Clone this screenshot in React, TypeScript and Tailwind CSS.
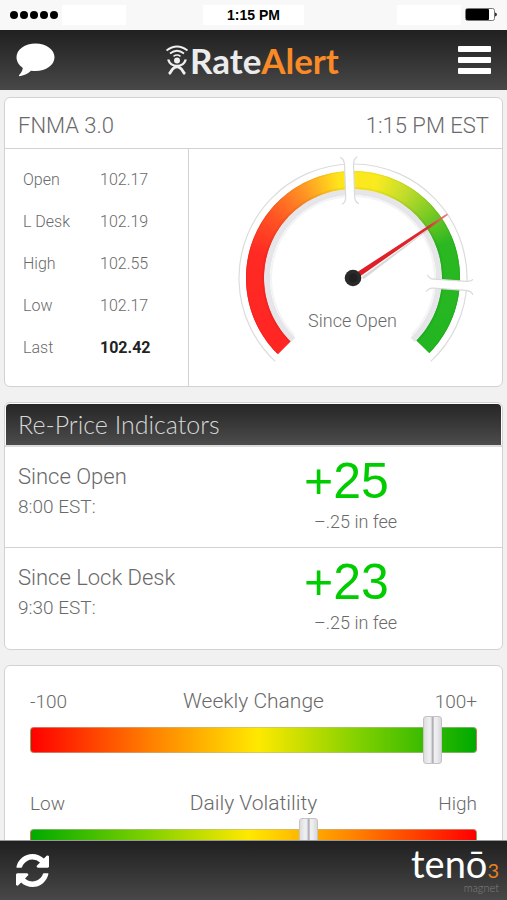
const quotes = [
  { label: "Open", value: "102.17" },
  { label: "L Desk", value: "102.19" },
  { label: "High", value: "102.55" },
  { label: "Low", value: "102.17" },
  { label: "Last", value: "102.42", strong: true },
];

const indicators = [
  { title: "Since Open", time: "8:00 EST:", change: "+25", fee: "–.25 in fee" },
  { title: "Since Lock Desk", time: "9:30 EST:", change: "+23", fee: "–.25 in fee" },
];

// angle in degrees (clockwise from 3 o'clock) -> rgb
const stops: [number, number[]][] = [
  [134, [255, 38, 36]],
  [195, [255, 42, 36]],
  [218, [255, 84, 36]],
  [240, [255, 146, 36]],
  [262, [255, 228, 28]],
  [284, [250, 234, 32]],
  [303, [190, 220, 44]],
  [322, [116, 200, 36]],
  [340, [44, 184, 34]],
  [406, [34, 182, 34]],
];

function colorAt(angle: number) {
  const i = Math.max(1, stops.findIndex(([a]) => a >= angle));
  const [a0, c0] = stops[i - 1];
  const [a1, c1] = stops[i];
  const t = (angle - a0) / (a1 - a0);
  return `rgb(${c0.map((c, k) => Math.round(c + (c1[k] - c) * t)).join(",")})`;
}

function arc(r: number, from: number, to: number) {
  const p = (a: number) => {
    const rad = (a * Math.PI) / 180;
    return `${(r * Math.cos(rad)).toFixed(2)} ${(r * Math.sin(rad)).toFixed(2)}`;
  };
  return `M${p(from)}A${r} ${r} 0 ${to - from > 180 ? 1 : 0} 1 ${p(to)}`;
}

const slices = Array.from({ length: 270 }, (_, i) => 134.5 + i);

function GaugeGap({ angle }: { angle: number }) {
  return (
    <g transform={`rotate(${angle})`}>
      <path d="M-4.5 -119H4.5V-76H-4.5Z" fill="#fff" />
      <path
        d="M-8.500 -121Q-4.500 -119 -4.500 -113V-81Q-4.500 -76 -8.500 -74M8.500 -121Q4.500 -119 4.500 -113V-81Q4.500 -76 8.500 -74"
        fill="none"
        stroke="#dadada"
        strokeWidth="1.2"
      />
    </g>
  );
}

function Gauge() {
  return (
    <svg width="240" height="220" viewBox="-120 -124 240 220" aria-hidden="true">
      <defs>
        <linearGradient id="needle" x1="0" x2="1">
          <stop offset="0" stopColor="#e01b24" />
          <stop offset="0.8" stopColor="#dd2a30" />
          <stop offset="1" stopColor="#e88080" />
        </linearGradient>
      </defs>
      <path d={arc(114, 133, 407)} fill="none" stroke="#dcdcdc" strokeWidth="1.2" />
      <path d={arc(86, 134, 406)} fill="none" stroke="#e6e6ea" strokeWidth="6" />
      <path d={arc(82, 136, 404)} fill="none" stroke="#f4f4f4" strokeWidth="2" />
      {slices.map((a) => (
        <path
          key={a}
          d={arc(98, a, Math.min(a + 2, 404.5))}
          fill="none"
          stroke={colorAt(a + 1)}
          strokeWidth="18"
        />
      ))}
      <path d={arc(106.5, 134.5, 404.5)} fill="none" stroke="#000" strokeOpacity="0.05" />
      <path d={arc(90, 134.5, 404.5)} fill="none" stroke="#000" strokeOpacity="0.05" strokeWidth="2" />
      <GaugeGap angle={-2} />
      <GaugeGap angle={94} />
      <g transform="rotate(-34)">
        <path d="M8 4L110 1L8 7Z" fill="#000" fillOpacity="0.15" />
        <path d="M0 -2.6L114 -0.8V0.8L0 2.6Z" fill="url(#needle)" />
      </g>
      <circle r="8.3" fill="#2a2a2a" />
      <circle r="4.5" fill="#202020" />
    </svg>
  );
}

function LogoMark() {
  return (
    <svg width="24" height="31" viewBox="0 0 24 31" fill="none" stroke="#f0f0f0" aria-hidden="true">
      <path d="M0.500 5.500Q11 -2.500 21.500 5.500" strokeWidth="1.800" />
      <path d="M4 8.500Q11 3 18 8.500" strokeWidth="1.800" />
      <path d="M7.500 11.300Q11 8.800 14.500 11.300" strokeWidth="1.600" />
      <circle cx="11" cy="15.500" r="3" fill="#f0f0f0" stroke="none" />
      <path d="M2.200 14.500C3.500 18.500 7 21 11 21S18.500 18.500 19.800 14.500" strokeWidth="2.400" />
      <path d="M3 29C5.500 27 6 21.800 11 21.800S16.500 27 19 29" strokeWidth="2.800" />
    </svg>
  );
}

function RefreshIcon() {
  return (
    <svg width="33" height="33" viewBox="0 0 1536 1536" fill="currentColor" aria-hidden="true">
      <path d="M1511 928q0 5-1 7-64 268-268 434.500t-478 166.500q-146 0-282.500-55t-243.500-157l-129 129q-19 19-45 19t-45-19-19-45v-448q0-26 19-45t45-19h448q26 0 45 19t19 45-19 45l-137 137q71 66 161 102t187 36q134 0 250-65t186-179q11-17 53-117 8-23 30-23h192q13 0 22.500 9.500t9.500 22.500zm25-800v448q0 26-19 45t-45 19h-448q-26 0-45-19t-19-45 19-45l138-138q-148-137-349-137-134 0-250 65t-186 179q-11 17-53 117-8 23-30 23h-199q-13 0-22.500-9.500t-9.500-22.500v-7q65-268 270-434.500t480-166.500q146 0 284 55.500t245 156.500l130-129q19-19 45-19t45 19 19 45z" />
    </svg>
  );
}

type MeterProps = {
  id: string;
  title: string;
  low: string;
  high: string;
  value: number;
  track: string;
};

function Meter({ id, title, low, high, value, track }: MeterProps) {
  return (
    <div>
      <div className="flex items-baseline justify-between">
        <span className="w-16 text-[19px] leading-7">{low}</span>
        <label htmlFor={id} className="text-[21px] leading-7">
          {title}
        </label>
        <span className="w-16 text-right text-[19px] leading-7">{high}</span>
      </div>
      <input
        id={id}
        type="range"
        min={0}
        max={100}
        defaultValue={value}
        className={`block h-12 w-full appearance-none bg-transparent [&::-webkit-slider-runnable-track]:h-[26px] [&::-webkit-slider-runnable-track]:rounded [&::-webkit-slider-runnable-track]:border [&::-webkit-slider-runnable-track]:border-[#b9b9a0]/60 [&::-webkit-slider-thumb]:-mt-3 [&::-webkit-slider-thumb]:h-12 [&::-webkit-slider-thumb]:w-[19px] [&::-webkit-slider-thumb]:appearance-none [&::-webkit-slider-thumb]:rounded-[3px] [&::-webkit-slider-thumb]:border [&::-webkit-slider-thumb]:border-[#c4c4c8] [&::-webkit-slider-thumb]:bg-[linear-gradient(90deg,#dcdce0,#f0f0f2_30%,#e8e8eb_42%,#b0b0b6_48%,#b0b0b6_54%,#f0f0f2_60%,#ececee_75%,#d8d8dc)] ${track}`}
      />
    </div>
  );
}

export default function App() {
  return (
    <div className="flex h-screen flex-col overflow-hidden bg-[#f1f1f1] font-['Roboto',sans-serif] font-light text-[#6a6a6a]">
      <div className="relative flex h-[30px] shrink-0 items-center justify-between bg-[#f8f8f8] px-2.5">
        <div className="flex items-center">
          <div className="flex gap-0.5">
            {[0, 1, 2, 3, 4].map((i) => (
              <span key={i} className="size-2 rounded-full bg-black" />
            ))}
          </div>
          <span className="ml-1 h-5 w-16 bg-white" />
        </div>
        <div className="absolute inset-x-0 flex justify-center">
          <span className="bg-white px-6 font-['Liberation_Sans',sans-serif] text-sm leading-5 font-bold text-black">
            1:15 PM
          </span>
        </div>
        <div className="flex items-center">
          <span className="mr-1 h-5 w-16 bg-white" />
          <svg width="32" height="14" viewBox="0 0 32 14" aria-hidden="true">
            <rect x="0.5" y="0.5" width="29" height="12" rx="2" fill="#fff" stroke="#777" />
            <rect x="1" y="1" width="23" height="11" rx="1" fill="#000" />
            <path d="M30 4.500Q32 5 32 6.500T30 8.500Z" fill="#333" />
          </svg>
        </div>
      </div>

      <header className="flex h-[60px] shrink-0 items-center justify-between bg-linear-to-b from-[#202020] to-[#484848] px-4">
        <button aria-label="Messages">
          <svg width="39" height="34" viewBox="0 0 39 34" fill="#fff" aria-hidden="true">
            <path d="M19.500 0.500C30 0.500 38.500 6.500 38.500 14.300S30 28 19.500 28C18 28 16.500 27.900 15 27.700C11.500 31 7.500 32.500 3.500 33.200C2.800 33.200 2.700 32.600 3.200 32C5 30 6.300 28 6.800 24.900C3 22.400 0.500 18.600 0.500 14.300C0.500 6.500 9 0.500 19.500 0.500Z" />
          </svg>
        </button>
        <h1 className="flex items-center pr-2 font-['Lato',sans-serif] text-[35px] font-bold text-[#ececec]">
          <LogoMark />
          <span>
            Rate<span className="text-[#f98a26]">Alert</span>
          </span>
        </h1>
        <button aria-label="Menu" className="flex w-[33px] flex-col gap-[5px]">
          <span className="h-1.5 rounded-[1px] bg-white" />
          <span className="h-1.5 rounded-[1px] bg-white" />
          <span className="h-1.5 rounded-[1px] bg-white" />
        </button>
      </header>

      <main className="flex min-h-0 flex-1 flex-col gap-[15px] overflow-hidden px-1 pt-[7px]">
        <section className="shrink-0 rounded-md border border-[#d2d2d2] bg-white">
          <div className="flex h-[51px] items-center justify-between border-b border-[#d2d2d2] px-[13px] pt-1 text-[22px]">
            <h2>FNMA 3.0</h2>
            <span>1:15 PM EST</span>
          </div>
          <div className="flex">
            <div className="w-[184px] shrink-0 border-r border-[#d2d2d2] pt-2.5 pb-[17px] pl-[18px]">
              <table className="text-base">
                <tbody>
                  {quotes.map((q) => (
                    <tr key={q.label} className="h-[42px]">
                      <th scope="row" className="w-[77px] text-left font-light">
                        {q.label}
                      </th>
                      <td className={q.strong ? "font-bold text-[#222]" : ""}>{q.value}</td>
                    </tr>
                  ))}
                </tbody>
              </table>
            </div>
            <div className="relative flex flex-1 justify-center pt-[5px] pl-3.5">
              <Gauge />
              <p className="absolute inset-x-0 top-[160px] pl-3.5 text-center text-lg leading-6">Since Open</p>
            </div>
          </div>
        </section>

        <section className="shrink-0 rounded-md border border-[#d2d2d2] bg-white">
          <div className="border-b-2 border-[#dcdcdc] p-px pb-0">
            <h2 className="h-[41px] rounded-t bg-linear-to-b from-[#262626] to-[#4c4c4c] px-3 font-['Lato',sans-serif] text-[25px] leading-[41px] text-[#d6d6d6]">
              Re-Price Indicators
            </h2>
          </div>
          {indicators.map((item) => (
            <div
              key={item.title}
              className="grid h-[101px] grid-cols-[286px_1fr] border-b border-[#d2d2d2] pl-[13px] last:border-b-0"
            >
              <div className="pt-[15px]">
                <h3 className="text-[22px] leading-[30px]">{item.title}</h3>
                <p className="text-[19px] leading-[30px]">{item.time}</p>
              </div>
              <div className="pt-[7px]">
                <p className="font-['Liberation_Sans',sans-serif] text-[50px] leading-[54px] font-normal text-[#0c0]">
                  {item.change}
                </p>
                <p className="pl-2.5 text-lg leading-7">{item.fee}</p>
              </div>
            </div>
          ))}
        </section>

        <section className="shrink-0 rounded-md border border-[#d2d2d2] bg-white px-[25px] pt-[21px] pb-5">
          <div className="flex flex-col gap-[25px]">
            <Meter
              id="weekly"
              title="Weekly Change"
              low="-100"
              high="100+"
              value={92}
              track="[&::-webkit-slider-runnable-track]:bg-[linear-gradient(90deg,#f00,#ff8000_27%,#ffe900_51%,#7fd000_74%,#0a0)]"
            />
            <Meter
              id="daily"
              title="Daily Volatility"
              low="Low"
              high="High"
              value={63}
              track="[&::-webkit-slider-runnable-track]:bg-[linear-gradient(90deg,#0a0,#7fd000_26%,#ffe900_49%,#ff8000_73%,#f00)]"
            />
          </div>
        </section>
      </main>

      <footer className="flex h-[60px] shrink-0 items-center justify-between border-t border-[#999] bg-linear-to-b from-[#202020] to-[#484848] pr-2 pl-4">
        <button aria-label="Refresh" className="text-white">
          <RefreshIcon />
        </button>
        <div className="flex flex-col items-end font-['Lato',sans-serif] text-white">
          <p className="flex items-baseline text-[38px] leading-8 font-normal">
            tenō<span className="text-xl leading-5 text-[#e8801e]">3</span>
          </p>
          <p className="pt-0.5 text-[11px] leading-3 text-[#808080]">magnet</p>
        </div>
      </footer>
    </div>
  );
}
